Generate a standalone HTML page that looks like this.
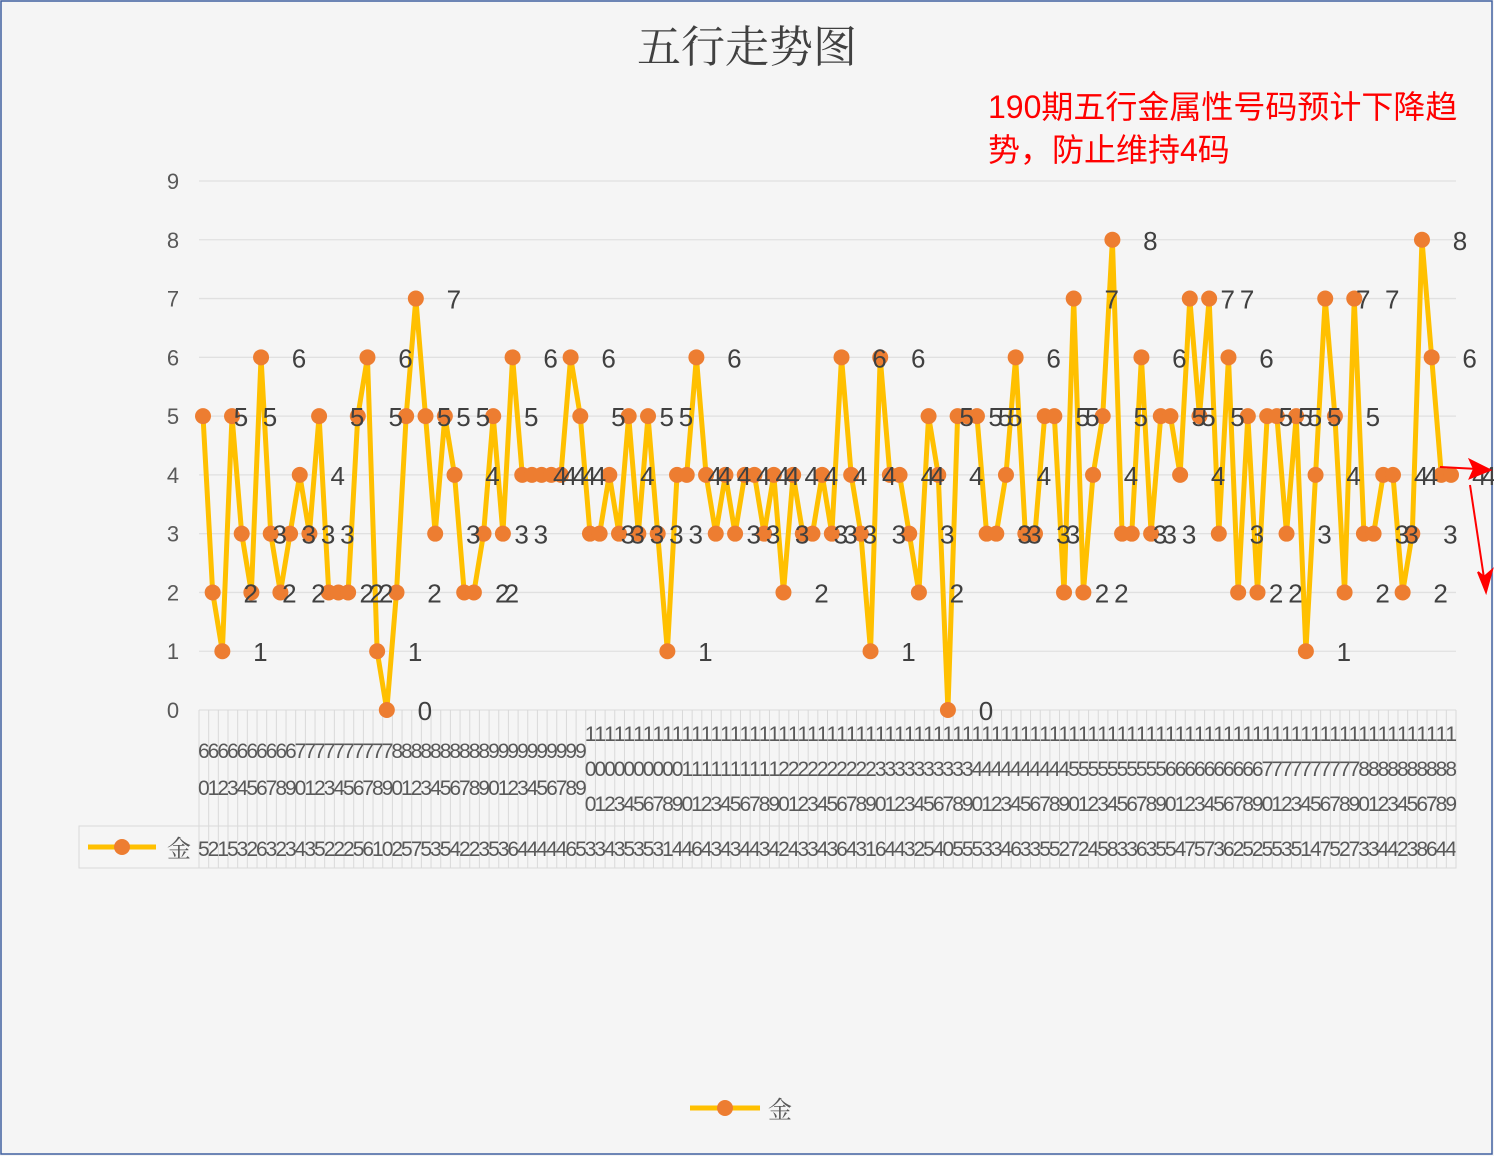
<!DOCTYPE html>
<html><head><meta charset="utf-8"><style>
body{margin:0;background:#fff}
svg{display:block}
</style></head><body>
<svg id="s" width="1494" height="1156" xmlns="http://www.w3.org/2000/svg" font-family="Liberation Sans, Noto Sans CJK SC, sans-serif">
<rect x="0" y="0" width="1494" height="1156" fill="#f5f5f5"/>
<rect x="1" y="1" width="1491" height="1153" fill="none" stroke="#4060a0" stroke-width="1.5"/>
<text x="747" y="62" text-anchor="middle" font-size="44" fill="#404040" font-family="Liberation Serif, Noto Serif CJK SC, serif">五行走势图</text>
<text x="988" y="118" font-size="32" fill="#ff0000" font-family="Liberation Sans, Noto Sans CJK SC, sans-serif">190期五行金属性号码预计下降趋</text>
<text x="988" y="161" font-size="32" fill="#ff0000" font-family="Liberation Sans, Noto Sans CJK SC, sans-serif">势，防止维持4码</text>
<g id="g"></g>
<rect x="79" y="826" width="1377" height="42" fill="none" stroke="#d9d9d9"/>
<line x1="88" y1="847" x2="156" y2="847" stroke="#ffc000" stroke-width="5"/>
<circle cx="122" cy="847" r="8" fill="#ed7d31"/>
<text x="167" y="857" font-size="24" fill="#595959" font-family="Liberation Serif, Noto Serif CJK SC, serif">金</text>
<line x1="690" y1="1108" x2="760" y2="1108" stroke="#ffc000" stroke-width="5"/>
<circle cx="725" cy="1108" r="8" fill="#ed7d31"/>
<text x="768" y="1118" font-size="24" fill="#595959" font-family="Liberation Serif, Noto Serif CJK SC, serif">金</text>
<g stroke="#ff0000" stroke-width="2" fill="#ff0000">
<line x1="1440" y1="467" x2="1478" y2="469"/>
<polygon points="1490,470 1470,460 1474,469 1470,478" />
<line x1="1470" y1="485" x2="1484" y2="578"/>
<polygon points="1486,592 1478,572 1484,577 1492,570"/>
</g>
</svg>
<script>
var d="5215326323435222561025753542235364444465334353531446434344342433436431644325405553346335527245833635547573625255351475273344238644";
var g=document.getElementById('g'),h='';
var x0=203,dx=(1451-203)/129,y0=710,dy=(710-181)/9;
for(var i=0;i<=9;i++){var y=y0-i*dy;h+='<line x1="199" y1="'+y+'" x2="1456" y2="'+y+'" stroke="#e0e0e0" stroke-width="1.3"/>';h+='<text x="173" y="'+(y+8)+'" text-anchor="middle" font-size="22" fill="#595959">'+i+'</text>';}
for(var i=0;i<=130;i++){var x=199+i*(1456-199)/130;h+='<line x1="'+x+'" y1="710" x2="'+x+'" y2="868" stroke="#d9d9d9" stroke-width="1"/>';}
var pts=[];
for(var i=0;i<130;i++){var x=x0+i*dx,v=+d[i],y=y0-v*dy;pts.push(x+','+y);
var n=String(60+i);var cx=199+(i+0.5)*(1456-199)/130;
if(n.length==2){h+='<text x="'+cx+'" y="758" text-anchor="middle" font-size="21" fill="#595959">'+n[0]+'</text><text x="'+cx+'" y="795" text-anchor="middle" font-size="21" fill="#595959">'+n[1]+'</text>';}
else{h+='<text x="'+cx+'" y="741" text-anchor="middle" font-size="21" fill="#595959">'+n[0]+'</text><text x="'+cx+'" y="776" text-anchor="middle" font-size="21" fill="#595959">'+n[1]+'</text><text x="'+cx+'" y="811" text-anchor="middle" font-size="21" fill="#595959">'+n[2]+'</text>';}
h+='<text x="'+cx+'" y="856" text-anchor="middle" font-size="21" fill="#595959">'+v+'</text>';}
h+='<polyline points="'+pts.join(' ')+'" fill="none" stroke="#ffc000" stroke-width="5" stroke-linejoin="round"/>';
for(var i=0;i<130;i++){var p=pts[i].split(',');h+='<circle cx="'+p[0]+'" cy="'+p[1]+'" r="8" fill="#ed7d31"/>';}
for(var i=0;i<130;i++){var p=pts[i].split(',');h+='<text x="'+(+p[0]+38)+'" y="'+(+p[1]+10)+'" text-anchor="middle" font-size="26" fill="#404040">'+d[i]+'</text>';}
g.innerHTML=h;
</script>
</body></html>
